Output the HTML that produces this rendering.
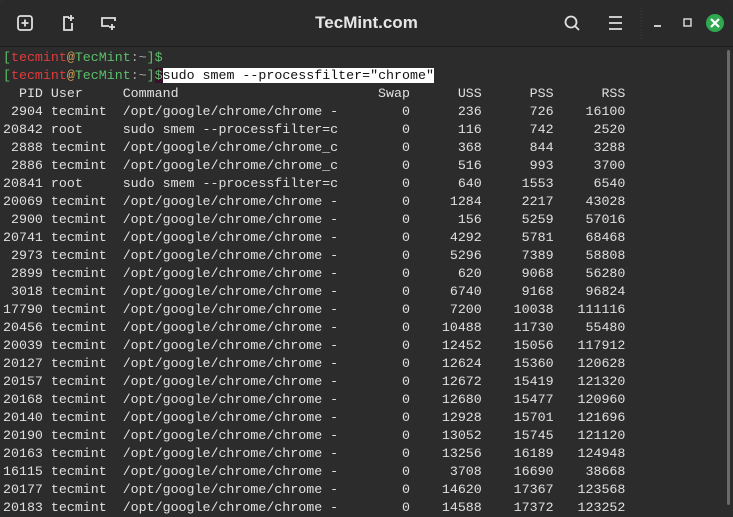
<!DOCTYPE html>
<html><head><meta charset="utf-8"><style>
html,body{margin:0;padding:0;width:733px;height:505px;overflow:hidden;background:#2c2c2c;}
.hdr{position:absolute;left:0;top:0;width:733px;height:46px;background:#2a2a2a;border-bottom:1px solid #1e1e1e;border-radius:8px 8px 0 0;}
.title{position:absolute;left:0;width:733px;top:13px;text-align:center;font:bold 17px "Liberation Sans",sans-serif;color:#e6e6e6;}
.term{position:absolute;left:3px;top:49px;margin:0;font:13.3px/18px "Liberation Mono",monospace;color:#e0e0e0;white-space:pre;}
.g{color:#5bbf6a}.r{color:#e23c3c}.o{color:#d1a15a}.gr{color:#a8a8a8}
.sel{background:#fff;color:#111}.cur{background:#3a0f2c}
.sb{position:absolute;left:727px;top:50px;width:3px;height:455px;background:#6a6a6a;border-radius:2px}
</style></head><body>
<div class="hdr">
<svg width="733" height="46" style="position:absolute;left:0;top:0">
<g fill="none" stroke="#e0e0e0" stroke-width="1.8">
<rect x="18" y="16" width="14" height="14" rx="2.5"/><path d="M25 19.5v7M21.5 23h7"/>
<path d="M69 17h-5v13h8v-7"/><path d="M71 15v6M68 18h6"/>
<path d="M109 26h-7v-8h13v3"/><path d="M112 24v6M109 27h6"/>
<circle cx="571" cy="22" r="5.5"/><path d="M575 26l4 4"/>
<path d="M609 17h13M609 23h13M609 29h13"/>
<path d="M654 26h7"/><rect x="684" y="19" width="7" height="7" stroke-width="1.4"/>
</g>
<circle cx="715" cy="23" r="9" fill="#2fa84f"/>
<path d="M711 19l8 8M719 19l-8 8" stroke="#fff" stroke-width="2.2"/>
<path d="M641 8v31" stroke="#3a3a3a" stroke-dasharray="1 2"/>
</svg>
<div class="title">TecMint.com</div>
</div>
<div class="sb"></div>
<pre class="term"><span class="g">[</span><span class="r">tecmint</span><span class="o">@</span><span class="g">TecMint</span><span class="gr">:~</span><span class="g">]$</span>
<span class="g">[</span><span class="r">tecmint</span><span class="o">@</span><span class="g">TecMint</span><span class="gr">:~</span><span class="g">]</span><span class="g cur">$</span><span class="sel">sudo smem --processfilter="chrome"</span>
  PID User     Command                         Swap      USS      PSS      RSS
 2904 tecmint  /opt/google/chrome/chrome -        0      236      726    16100
20842 root     sudo smem --processfilter=c        0      116      742     2520
 2888 tecmint  /opt/google/chrome/chrome_c        0      368      844     3288
 2886 tecmint  /opt/google/chrome/chrome_c        0      516      993     3700
20841 root     sudo smem --processfilter=c        0      640     1553     6540
20069 tecmint  /opt/google/chrome/chrome -        0     1284     2217    43028
 2900 tecmint  /opt/google/chrome/chrome -        0      156     5259    57016
20741 tecmint  /opt/google/chrome/chrome -        0     4292     5781    68468
 2973 tecmint  /opt/google/chrome/chrome -        0     5296     7389    58808
 2899 tecmint  /opt/google/chrome/chrome -        0      620     9068    56280
 3018 tecmint  /opt/google/chrome/chrome -        0     6740     9168    96824
17790 tecmint  /opt/google/chrome/chrome -        0     7200    10038   111116
20456 tecmint  /opt/google/chrome/chrome -        0    10488    11730    55480
20039 tecmint  /opt/google/chrome/chrome -        0    12452    15056   117912
20127 tecmint  /opt/google/chrome/chrome -        0    12624    15360   120628
20157 tecmint  /opt/google/chrome/chrome -        0    12672    15419   121320
20168 tecmint  /opt/google/chrome/chrome -        0    12680    15477   120960
20140 tecmint  /opt/google/chrome/chrome -        0    12928    15701   121696
20190 tecmint  /opt/google/chrome/chrome -        0    13052    15745   121120
20163 tecmint  /opt/google/chrome/chrome -        0    13256    16189   124948
16115 tecmint  /opt/google/chrome/chrome -        0     3708    16690    38668
20177 tecmint  /opt/google/chrome/chrome -        0    14620    17367   123568
20183 tecmint  /opt/google/chrome/chrome -        0    14588    17372   123252</pre>
</body></html>
